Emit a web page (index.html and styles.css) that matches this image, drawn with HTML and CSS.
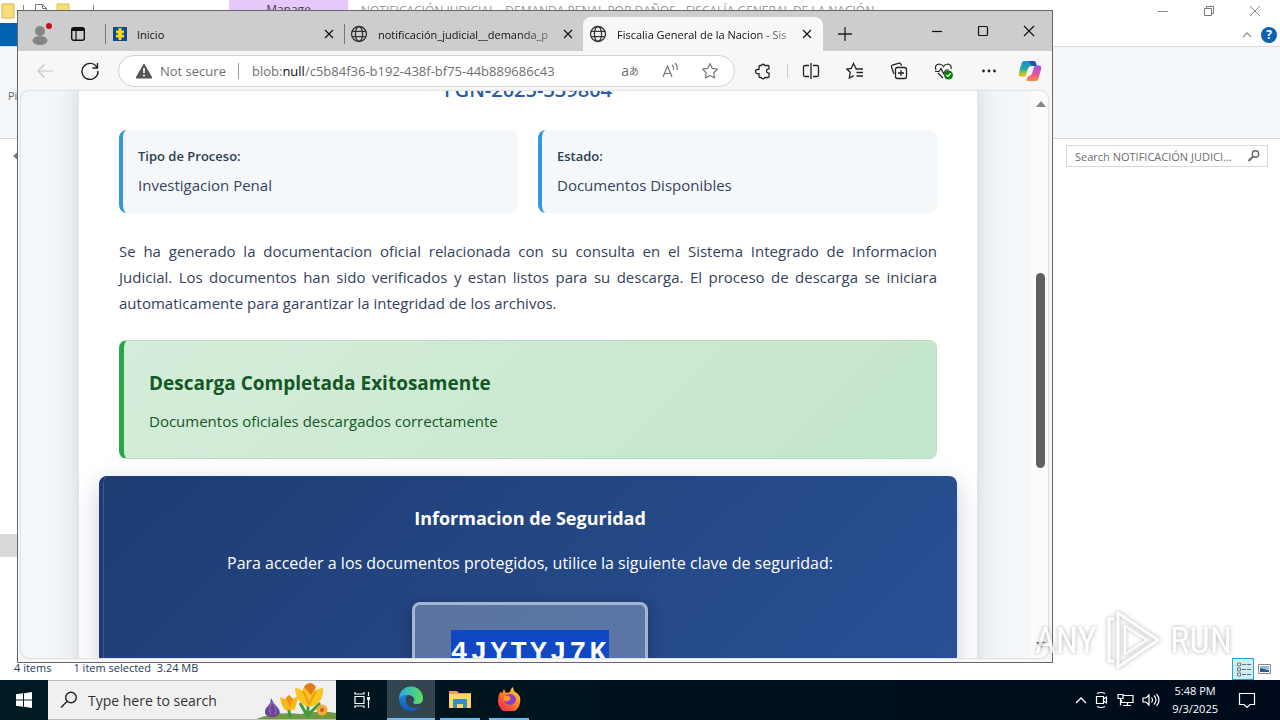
FILE: index.html
```
<!DOCTYPE html>
<html lang="es">
<head>
<meta charset="utf-8">
<meta name="viewport" content="width=device-width, initial-scale=1">
<title>Fiscalia General de la Nacion</title>
<link rel="stylesheet" href="styles.css">
</head>
<body>
<svg class="defs" aria-hidden="true">
  <symbol id="globe" viewBox="0 0 18 18"><g fill="none" stroke="#333" stroke-width="1.3"><circle cx="9" cy="9" r="7.5"/><ellipse cx="9" cy="9" rx="3.6" ry="7.5"/><path d="M2 6.3h14M2 11.7h14"/></g></symbol>
  <symbol id="close" viewBox="0 0 12 12"><path d="M2 2l8 8M10 2l-8 8" fill="none" stroke="currentColor" stroke-width="1.2"/></symbol>
</svg>
<div class="desktop">
  <section class="explorer">
    <header class="ex-title">
      <div class="ex-quick">
        <svg width="100" height="22" viewBox="0 0 100 22"><path d="M2 4h12v14H2z" fill="#f8dc78" stroke="#d9b445"/><path d="M23.500 5v12M93.500 5v12" stroke="#888"/><path d="M35.500 18V4.500h7l4 4V18zM42.500 4.500v4h4" fill="#fff" stroke="#777"/><path d="M57 4h12v14H57z" fill="#f8dc78" stroke="#e0bd55"/></svg>
      </div>
      <div class="ex-manage">Manage</div>
      <div class="ex-name">NOTIFICACIÓN JUDICIAL - DEMANDA PENAL POR DAÑOS - FISCALÍA GENERAL DE LA NACIÓN</div>
      <div class="ex-controls">
        <button aria-label="Minimize explorer"><svg width="12" height="12"><path d="M1 6.500h10" stroke="#888"/></svg></button>
        <button aria-label="Restore explorer"><svg width="12" height="12"><path d="M1.500 3.500h7v7h-7zM3.500 3.500v-2h7v7h-2" fill="none" stroke="#777"/></svg></button>
        <button aria-label="Close explorer"><svg width="12" height="12"><path d="M1 1l10 10M11 1L1 11" stroke="#888"/></svg></button>
      </div>
    </header>
    <div class="ex-tabs">
      <button class="ex-file" aria-label="File"></button>
      <div class="ex-help">
        <svg width="10" height="8"><path d="M1 6l4-4 4 4" fill="none" stroke="#999" stroke-width="1.400"/></svg>
        <button class="help">?</button>
      </div>
    </div>
    <div class="ribbon"><span>Pin</span></div>
    <div class="ex-address">
      <svg class="ex-arrow" width="8" height="12"><path d="M8 0v12L1 6z" fill="#777"/></svg>
      <label class="search"><input type="text" aria-label="Search folder" value="Search NOTIFICACIÓN JUDICI..."><svg width="14" height="14"><circle cx="8.500" cy="5" r="3.200" fill="none" stroke="#666" stroke-width="1.400"/><path d="M6 7.500L1.500 12" stroke="#666" stroke-width="2"/></svg></label>
    </div>
    <div class="ex-body"><div class="ex-selected"></div></div>
    <footer class="ex-status">
      <span>4 items</span><span>1 item selected&nbsp; 3.24 MB</span>
      <div class="views">
        <button class="view on" aria-label="Details"><svg width="20" height="20"><g fill="none" stroke="#666"><path d="M4.500 4h3v3h-3zM4.500 9h3v3h-3zM4.500 14h3v3h-3z" stroke="#777"/><path d="M9 5.500h4M14 5.500h4M9 10.500h4M14 10.500h4M9 15.500h4M14 15.500h4"/></g></svg></button>
        <button class="view" aria-label="Thumbnails"><svg width="20" height="20"><path d="M3.500 5.500h12v9h-12z" fill="#fff" stroke="#888"/><path d="M5 7h9v3H5z" fill="#8bbbe6"/><path d="M5 9l4 1 5 1v2H5z" fill="#2f5877"/></svg></button>
      </div>
    </footer>
  </section>

  <section class="browser">
    <header class="tabbar">
      <button class="profile" aria-label="Profile"><svg width="26" height="28" viewBox="0 0 26 28"><circle cx="13" cy="11" r="5" fill="#858585"/><ellipse cx="13" cy="20.500" rx="7.500" ry="4.500" fill="#858585"/><circle cx="22" cy="6" r="3" fill="#c50f1f"/></svg></button>
      <button class="tabmenu" aria-label="Tab actions"><svg width="16" height="16" viewBox="0 0 16 16"><rect x="1.700" y="1.700" width="12.600" height="12.600" rx="2" fill="none" stroke="#111" stroke-width="1.400"/><path d="M2 2h12v3H2z" fill="#111"/><path d="M6 5v9" stroke="#111" stroke-width="1.200"/></svg></button>
      <div class="tab">
        <svg width="14" height="14"><path fill="#114a8b" d="M0 0h14v14H0z"/><path fill="#f9d616" d="M5.500 1h3v2.500H11v2.700H9v1.600h2v2.700H8.500V13h-3v-2.500H3V7.800h2V6.200H3V3.500h2.500z"/></svg>
        <span>Inicio</span>
        <button aria-label="Close Inicio"><svg width="12" height="12"><use href="#close"/></svg></button>
      </div>
      <div class="tab">
        <svg width="18" height="18"><use href="#globe"/></svg>
        <span class="fade">notificación_judicial__demanda_p</span>
        <button aria-label="Close notificación"><svg width="12" height="12"><use href="#close"/></svg></button>
      </div>
      <div class="tab active">
        <svg width="18" height="18"><use href="#globe"/></svg>
        <span class="fade">Fiscalia General de la Nacion - Sis</span>
        <button aria-label="Close Fiscalia"><svg width="12" height="12"><use href="#close"/></svg></button>
      </div>
      <button class="newtab" aria-label="New tab"><svg width="16" height="16"><path d="M8 1v14M1 8h14" stroke="#222" stroke-width="1.300"/></svg></button>
      <div class="controls">
        <button aria-label="Minimize"><svg width="12" height="12"><path d="M1 6.500h10" stroke="#111" stroke-width="1.200"/></svg></button>
        <button aria-label="Maximize"><svg width="12" height="12"><rect x="1.500" y="1.500" width="9" height="9" rx="1" fill="none" stroke="#111" stroke-width="1.200"/></svg></button>
        <button aria-label="Close"><svg width="12" height="12"><path d="M1 1l10 10M11 1L1 11" stroke="#111" stroke-width="1.200"/></svg></button>
      </div>
    </header>
    <div class="toolbar">
      <button class="back" aria-label="Back"><svg width="18" height="18"><path d="M17 9H2M8.500 2.500L2 9l6.500 6.500" fill="none" stroke="#c4c4c4" stroke-width="1.200"/></svg></button>
      <button aria-label="Refresh"><svg width="18" height="18"><path d="M16 5.500A8 8 0 1 0 17 9M16.500 1v5h-5" fill="none" stroke="#222" stroke-width="1.400"/></svg></button>
      <div class="address">
        <svg width="16" height="16"><path d="M8 1l8 14H0z" fill="#555" stroke="#555" stroke-linejoin="round"/><path d="M8 5v5M8 11.500v2" stroke="#fff" stroke-width="1.600"/></svg>
        <span class="notsecure">Not secure</span>
        <div class="url">blob:<b>null</b>/c5b84f36-b192-438f-bf75-44b889686c43</div>
        <button class="translate" aria-label="Translate"><span>a</span><span class="jp">あ</span></button>
        <button aria-label="Read aloud"><svg width="18" height="18"><path d="M2 15L6.500 4 11 15M3.500 11.500h6M11 3q2 2 1.500 5M14 1q3 3 2 7" fill="none" stroke="#777" stroke-width="1.200"/></svg></button>
        <button aria-label="Favorite"><svg width="18" height="18"><path d="M9 1.500l2.300 4.900 5.200.7-3.800 3.700.9 5.200L9 13.500 4.400 16l.9-5.200L1.500 7.100l5.200-.7z" fill="none" stroke="#777" stroke-width="1.200" stroke-linejoin="round"/></svg></button>
      </div>
      <div class="tools">
        <button aria-label="Extensions"><svg width="18" height="18"><path d="M6 3.500h1.200a2 2 0 0 1 3.700 0H14q1 0 1 1v2.300h-.8a2.200 2.200 0 0 0 0 4.300h.8v3.400q0 1-1 1h-3.100a2 2 0 0 1-3.700 0H6q-1 0-1-1v-2.800H3.800a2 2 0 0 1 0-4.400H5V4.500q0-1 1-1z" fill="none" stroke="#222" stroke-width="1.300"/></svg></button>
        <i class="sep"></i>
        <button aria-label="Split screen"><svg width="18" height="18"><path d="M7 3.500H3q-1.500 0-1.500 1.500v8q0 1.500 1.500 1.500h4M11 3.500h4q1.500 0 1.500 1.500v8q0 1.500-1.500 1.500h-4M9 1v16" fill="none" stroke="#222" stroke-width="1.300"/></svg></button>
        <button aria-label="Favorites"><svg width="18" height="18"><path d="M10 6.500L7.500 1.500 5.300 6.300l-4.500.7 3.400 3.300L3.300 16l4.500-2.400M9.500 7H17M10.500 10.500H17M10.500 14H17" fill="none" stroke="#222" stroke-width="1.300"/></svg></button>
        <button aria-label="Collections"><svg width="18" height="18"><path d="M4 12L1.500 5q-.5-1.500 1-2L9 1.200q1.500-.4 2 1l.5 1.500" fill="none" stroke="#222" stroke-width="1.300"/><rect x="5.500" y="5.500" width="11" height="11" rx="2" fill="none" stroke="#222" stroke-width="1.300"/><path d="M11 8v6M8 11h6" stroke="#222" stroke-width="1.300"/></svg></button>
        <button aria-label="Browser essentials"><svg width="20" height="18"><path d="M2 8Q0 3 5 2q3 0 4.500 2.500Q11 2 14 2q4 1 3 5M1 9.500h4l2-3 2.500 5L12 8h3M4 11l5 5" fill="none" stroke="#222" stroke-width="1.200"/><circle cx="14.500" cy="13" r="4.500" fill="#107c10"/><path d="M12.300 13l1.600 1.500 2.800-3" fill="none" stroke="#fff" stroke-width="1.200"/></svg></button>
        <button aria-label="Settings"><svg width="18" height="18"><g fill="#222"><circle cx="3.500" cy="9" r="1.400"/><circle cx="9" cy="9" r="1.400"/><circle cx="14.500" cy="9" r="1.400"/></g></svg></button>
        <button class="copilot" aria-label="Copilot"><svg width="24" height="22" viewBox="0 0 24 22"><defs><linearGradient id="cl" x2="0" y2="1"><stop stop-color="#1a8ae0"/><stop offset=".5" stop-color="#22a6a0"/><stop offset=".8" stop-color="#b2c62c"/><stop offset="1" stop-color="#f7b500"/></linearGradient><linearGradient id="cr" x2="0" y2="1"><stop stop-color="#9a52e8"/><stop offset=".5" stop-color="#e552a4"/><stop offset="1" stop-color="#ff8a3c"/></linearGradient></defs><path d="M6 1h8q2 0 1.500 2l-2 3q-3 0-4 4l-1.500 5q-.5 1.500-2 1.500H3q-3 0-2-4l2.500-9Q4 1 6 1z" fill="url(#cl)"/><path d="M11 1h5q1.500 0 2 2l1 3h-5q-1 0-1-1z" fill="#1c4fb8"/><path d="M18 21h-8q-2 0-1.500-2l2-3q3 0 4-4L16 7q.5-1.500 2-1.500h3q3 0 2 4l-2.500 9q-.5 2.500-2.500 2.500z" fill="url(#cr)"/></svg></button>
      </div>
    </div>
    <div class="viewport">
      <main class="page">
        <article class="doc">
          <h1>FGN-2025-339804</h1>
          <div class="facts">
            <div class="fact"><strong>Tipo de Proceso:</strong><span>Investigacion Penal</span></div>
            <div class="fact"><strong>Estado:</strong><span>Documentos Disponibles</span></div>
          </div>
          <p class="intro">Se ha generado la documentacion oficial relacionada con su consulta en el Sistema Integrado de Informacion Judicial.&nbsp;Los documentos han sido verificados y estan listos para su descarga. El proceso de descarga se iniciara automaticamente para garantizar la integridad de los archivos.</p>
          <div class="done">
            <h2>Descarga Completada Exitosamente</h2>
            <p>Documentos oficiales descargados correctamente</p>
          </div>
          <div class="security">
            <h3>Informacion de Seguridad</h3>
            <p>Para acceder a los documentos protegidos, utilice la siguiente clave de seguridad:</p>
            <div class="key"><code>4JYTYJ7K</code></div>
          </div>
        </article>
      </main>
      <div class="scroll">
        <svg width="10" height="6"><path d="M0 6l5-6 5 6z" fill="#858585"/></svg>
        <div class="track"><div class="thumb"></div></div>
        <svg width="10" height="6"><path d="M0 0l5 6 5-6z" fill="#666"/></svg>
      </div>
    </div>
  </section>

  <div class="watermark">
    <span>ANY</span>
    <svg width="58" height="62" viewBox="0 0 58 62"><g fill="none" stroke="#fff" stroke-width="3" stroke-linejoin="round"><path d="M14 3l40 27-40 27z"/><path d="M21 16l22 14-22 14z" stroke-width="2"/><path d="M10 9H5v42h5"/></g></svg>
    <span>RUN</span>
  </div>

  <footer class="taskbar">
    <button class="start" aria-label="Start"><svg width="16" height="16"><path d="M0 2.300l7-1v6.200H0zM8 1.200L16 0v7.500H8zM0 8.500h7v6.200l-7-1zM8 8.500h8V16l-8-1.200z" fill="#fff"/></svg></button>
    <label class="find">
      <svg width="18" height="18"><circle cx="11" cy="6.500" r="5.300" fill="none" stroke="#222" stroke-width="1.400"/><path d="M7.200 10.300L1 16.500" stroke="#222" stroke-width="1.400"/></svg>
      <input type="text" aria-label="Search" value="Type here to search">
      <svg class="flowers" width="80" height="38" viewBox="0 0 80 38"><path d="M0 38Q20 30 45 33q20-4 35-1v6z" fill="#6f9a45"/><path d="M34 36l-2-12M52 36V18M52 36l-8-14M52 34l12-12" stroke="#3f9a3a" stroke-width="3" fill="none"/><path d="M15 17q2 5 7 10 4 5-1 8-6 3-11-1-3-5 2-9 3-3 3-8z" fill="#6a4596"/><path d="M16 21q-4 7-1 13M16 21q6 6 3 13" stroke="#9873bd" fill="none"/><path d="M24 16l5 2 4-4 4 4 5-3q-1 9-4 14h-9q-4-5-5-13z" fill="#f8b81c"/><path d="M30 17l3-3 4 4-3 8z" fill="#ef8f1c"/><path d="M39 7q5 0 7 3 3-7 7-7t7 7q2-3 7-3 1 11-7 17-8 4-14-1-7-7-7-16z" fill="#fbc521"/><path d="M48 6q6-8 12 0l-5 8z" fill="#e77a17"/><path d="M47 10l6 13 7-13" stroke="#f09b17" stroke-width="2" fill="none"/><circle cx="66" cy="29" r="5.500" fill="#f5a93b"/><circle cx="66" cy="29" r="2" fill="#bd6521"/></svg>
    </label>
    <button class="task" aria-label="Task view"><svg width="18" height="18"><g fill="none" stroke="#fff" stroke-width="1.200"><path d="M2 5.500h9v7H2zM2 1v2h9V1M2 17v-2h9v2M15.500 1v4M15.500 9v8"/></g><path d="M14 6h3v3h-3z" fill="#fff"/></svg></button>
    <button class="task app current" aria-label="Edge"><svg width="26" height="26" viewBox="0 0 26 26"><defs><linearGradient id="e1" x2="1"><stop stop-color="#2ba8e5"/><stop offset="1" stop-color="#5de05b"/></linearGradient><linearGradient id="e2" x2="0" y2="1"><stop stop-color="#1688d6"/><stop offset="1" stop-color="#1557b5"/></linearGradient></defs><path d="M1 13A12 12 0 0 1 25 12q0 6-6 6-4 0-4-2 2-1 1-4-2-3-6-3-6 0-9 4z" fill="url(#e1)"/><path d="M1 13q3-5 9-4-3 2-2 7 2 6 9 6 4 0 6-2-4 5-10 5Q2 25 1 13z" fill="url(#e2)"/></svg></button>
    <button class="task app" aria-label="File Explorer"><svg width="22" height="20"><path d="M0 2h8l2 2h12v15H0z" fill="#e8aa27"/><path d="M0 5h22v14H0z" fill="#fcd866"/><path d="M4 11q0-1 1-1h12q1 0 1 1v8h-4v-4H8v4H4z" fill="#3b8bc6"/></svg></button>
    <button class="task app" aria-label="Firefox"><svg width="24" height="24" viewBox="0 0 24 24"><defs><linearGradient id="ff" x1="1" x2=".2" y2="1"><stop stop-color="#fff04a"/><stop offset=".45" stop-color="#ff8a1c"/><stop offset="1" stop-color="#f2245c"/></linearGradient></defs><path d="M3 5l2 1 2-4 2 4 4-1q0-3 3-5l1 4 4 3q3 3 2 8a11 11 0 0 1-22-1q0-5 2-9z" fill="url(#ff)"/><path d="M8 9l4-2q6 0 7 5 0 5-6 6-6-1-6-6 2 2 4 0z" fill="#8a3bd0"/><path d="M7 9q4-1 6 1 2 3-2 4-3 1-4-1z" fill="#ff9a28"/></svg></button>
    <div class="tray">
      <svg width="12" height="8"><path d="M1 7l5-5 5 5" fill="none" stroke="#fff" stroke-width="1.300"/></svg>
      <svg width="14" height="18"><path d="M1.500 5.500h7v7h-7zM8.500 8l3-2v6l-3-2M2 2.500q4-2 8 0M2 15.500q4 2 8 0" fill="none" stroke="#fff" stroke-width="1.200"/></svg>
      <svg width="17" height="16"><path d="M6 3.500h10v7H4.500V8M10.500 10.500v3M6 13.500h8M1 2.500h5v4H1zM3.500 6.500v7" fill="none" stroke="#fff" stroke-width="1.200"/></svg>
      <svg width="18" height="16"><path d="M1 6h3l3-3v10l-3-3H1zM9.500 5.500q2 2.500 0 5M12 3.500q4 4.500 0 9M14.500 2q5 6 0 12" fill="none" stroke="#fff" stroke-width="1.200"/></svg>
      <div class="clock"><time>5:48 PM</time><time>9/3/2025</time></div>
      <svg width="18" height="18"><path d="M1.500 2.500h15v11H12l-3 3-3-3H1.500z" fill="none" stroke="#fff" stroke-width="1.200"/></svg>
    </div>
  </footer>
</div>
</body>
</html>
```
FILE: styles.css
```
* { box-sizing: border-box; }
body { margin: 0; font-family: "Open Sans", "Noto Sans", sans-serif; font-size: 12px; color: #222; }
button { padding: 0; border: 0; background: none; font: inherit; color: inherit; display: flex; align-items: center; justify-content: center; }
input { border: 0; padding: 0; background: none; font: inherit; color: inherit; min-width: 0; flex: 1; outline: 0; }
svg { flex: none; display: block; }
.defs { position: absolute; width: 0; height: 0; }
.desktop { position: relative; height: 100vh; display: flex; flex-direction: column; overflow: hidden; }

/* Explorer window */
.explorer { flex: 1; min-height: 0; display: flex; flex-direction: column; background: #fff; }
.ex-title { display: flex; height: 23px; }
.ex-quick { width: 229px; }
.ex-manage { width: 119px; background: #e6c8fa; text-align: center; line-height: 20px; color: #444; }
.ex-name { padding-left: 13px; line-height: 22px; color: #999; white-space: nowrap; flex: 1; }
.ex-controls { display: flex; height: 21px; gap: 34px; padding-right: 19px; }
.ex-tabs { display: flex; justify-content: space-between; height: 23px; }
.ex-file { width: 56px; background: #0063b1; }
.ex-help { display: flex; align-items: center; gap: 9px; padding-right: 3px; }
.help { width: 16px; height: 16px; border-radius: 50%; background: #0d61b5; color: #fff; font-weight: 700; }
.ribbon { height: 93px; border: solid #dadbdc; border-width: 1px 0; background: #f4f7fa; padding: 42px 8px; font-size: 11px; line-height: 14px; color: #666; }
.ex-address { display: flex; align-items: center; justify-content: space-between; height: 34px; padding: 0 12px; }
.search { display: flex; align-items: center; width: 202px; height: 22px; border: 1px solid #d9d9d9; padding: 0 6px 0 8px; font-size: 11px; color: #6d6d6d; }
.ex-body { flex: 1; display: flex; flex-direction: column; justify-content: flex-end; padding-bottom: 101px; }
.ex-selected { width: 60px; height: 23px; background: #d9d9d9; }
.ex-status { display: flex; align-items: center; gap: 22px; height: 22px; padding-left: 14px; font-size: 11px; line-height: 14px; color: #1e395b; }
.ex-status > span { padding-bottom: 2px; }
.views { margin-left: auto; display: flex; padding-right: 4px; }
.view { width: 22px; height: 22px; }
.view.on { background: #cceefb; border: 1px solid #26a0da; }

/* Browser window */
.browser { position: absolute; inset: 10px 227px 57px 17px; display: flex; flex-direction: column; border: 1px solid #666; background: #f7f7f7; }
.tabbar { display: flex; align-items: flex-end; height: 40px; background: #cdcdcd; }
.tabbar > button { height: 34px; }
.profile { width: 44px; }
.tabmenu { width: 32px; }
.tab { display: flex; align-items: center; gap: 10px; width: 239px; height: 34px; padding: 0 4px 0 6px; font-size: 11px; color: #111; }
.tabmenu + .tab { margin-left: 6px; }
.tab:not(.active) { padding-left: 0; }
.tab:not(.active)::before { content: ""; width: 1px; height: 20px; margin: 0 -3px 0 5px; background: #777; }
.tab:not(.active) + .tab:not(.active)::before { margin-right: -5px; }
.tab span { flex: 1; min-width: 0; white-space: nowrap; }
.fade { mask-image: linear-gradient(90deg, #000 80%, #0006); }
.tab.active { width: 240px; margin-left: 5px; padding-right: 10px; background: #f7f7f7; border-radius: 8px 8px 0 0; }
.newtab { width: 44px; }
.controls { display: flex; align-items: center; gap: 34px; height: 40px; margin-left: auto; padding-right: 17px; }
.toolbar { display: flex; align-items: center; height: 40px; padding: 0 10px 0 18px; gap: 19px; }
.back { margin-right: 8px; }
.address { flex: 1; display: flex; align-items: center; height: 32px; border: 1px solid #d2d2d2; border-radius: 16px; background: #fff; padding: 0 15px 0 17px; font-size: 13px; color: #707070; }
.notsecure { padding: 0 12px 0 8px; border-right: 1px solid #999; line-height: 16px; white-space: nowrap; }
.url { flex: 1; padding-left: 13px; white-space: nowrap; }
.url b { font-weight: 400; color: #111; }
.address button { margin-left: 22px; }
.translate .jp { font-family: "Noto Sans CJK JP", sans-serif; font-size: 10px; }
.translate { font-size: 14px; line-height: 20px; }
.tools { display: flex; align-items: center; gap: 26px; }
.tools .sep { width: 1px; height: 14px; margin: 0 -12px 0 -11px; background: #ccc; }
.copilot { margin-left: -6px; }

/* Web page */
.viewport { flex: 1; min-height: 0; display: flex; margin: 0 4px 4px 3px; border-radius: 8px; overflow: hidden; background: #f4f7fa; box-shadow: 0 0 2px #aaa; }
.page { flex: 1; min-width: 0; padding: 0 54px 0 58px; overflow: hidden; }
.doc { min-height: 100%; padding: 0 40px; background: #fff; box-shadow: 0 0 25px #00000024; color: #34435a; font-size: 15px; }
.doc h1 { margin: -15px 0 27px; text-align: center; font-size: 20px; line-height: 27px; font-weight: 600; color: #2a5ca8; }
.facts { display: grid; grid-template-columns: 1fr 1fr; gap: 20px; }
.fact { display: flex; flex-direction: column; gap: 3px; padding: 14px 15px 15px; border-left: 4px solid #3498db; border-radius: 8px; background: #f5f8fb; line-height: 26px; }
.fact strong { font-size: 13px; font-weight: 600; color: #2c3e50; line-height: 25px; }
.intro { margin: 25px 0 24px; line-height: 26px; text-align: justify; }
.done { padding: 25px 24px 19px 25px; border: 1px solid #b9dfc3; border-left: 5px solid #28a745; border-radius: 8px; background: linear-gradient(135deg, #d4edda, #c3e6cb); color: #155724; line-height: 26px; }
.done h2 { margin: 0 0 8px; font-size: 19px; line-height: 34px; font-weight: 700; }
.done p { margin: 0 0 5px; }
.security { margin: 17px -20px 0; padding: 25px; border-left: 4px solid #1e3c72; border-radius: 8px; background: linear-gradient(135deg, #1e3c72, #2a5298); box-shadow: 0 8px 25px #1e3c7240, inset 1px 0 #42579a; color: #fff; text-align: center; min-height: 260px; }
.security h3 { margin: 0 0 15px; font-size: 18px; line-height: 34px; font-weight: 700; }
.security p { margin: 0 0 25px; font-size: 16px; line-height: 27px; }
.key { display: inline-block; padding: 25px 36px; border: 3px solid #a5b4d1; border-radius: 8px; background: #ffffff40; box-shadow: 0 4px 15px #0000004d; }
.key code { display: block; font: bold 28px/46px "Liberation Mono", monospace; letter-spacing: 3px; background: #1048c4; }
.scroll { width: 17px; padding: 10px 3px 10px 5px; display: flex; flex-direction: column; align-items: center; background: #fcfcfc; }
.track { flex: 1; padding-top: 166px; }
.thumb { width: 9px; height: 45%; min-height: 195px; border-radius: 5px; background: #606060; }

.watermark { position: absolute; right: 48px; bottom: 48px; display: flex; align-items: center; gap: 8px; font: 36px "Liberation Sans Narrow", "Roboto Condensed", "Roboto", sans-serif; color: #fff; opacity: .8; filter: drop-shadow(0 0 2px #999); }

/* Taskbar */
.taskbar { display: flex; height: 40px; background: linear-gradient(90deg, #001a22, #00111c 60%, #000a1c); color: #fff; }
.start { width: 48px; }
.find { display: flex; align-items: center; width: 288px; padding-left: 12px; background: #f0f0f0; border: 1px solid #bbb; border-width: 1px 0; color: #333; font-size: 14px; }
.find input { padding-left: 10px; }
.task { width: 51px; }
.app { border-bottom: 2px solid #76b9ed; background-clip: padding-box; }
.app:not(.current) { width: 40px; margin: 0 4px 0 5px; }
.task.current { width: 48px; background: #33464f; }
.tray { margin-left: auto; display: flex; align-items: center; gap: 8px; padding-right: 24px; }
.clock { display: flex; flex-direction: column; align-items: center; padding: 0 12px 0 4px; font-size: 11px; line-height: 18px; }
```
